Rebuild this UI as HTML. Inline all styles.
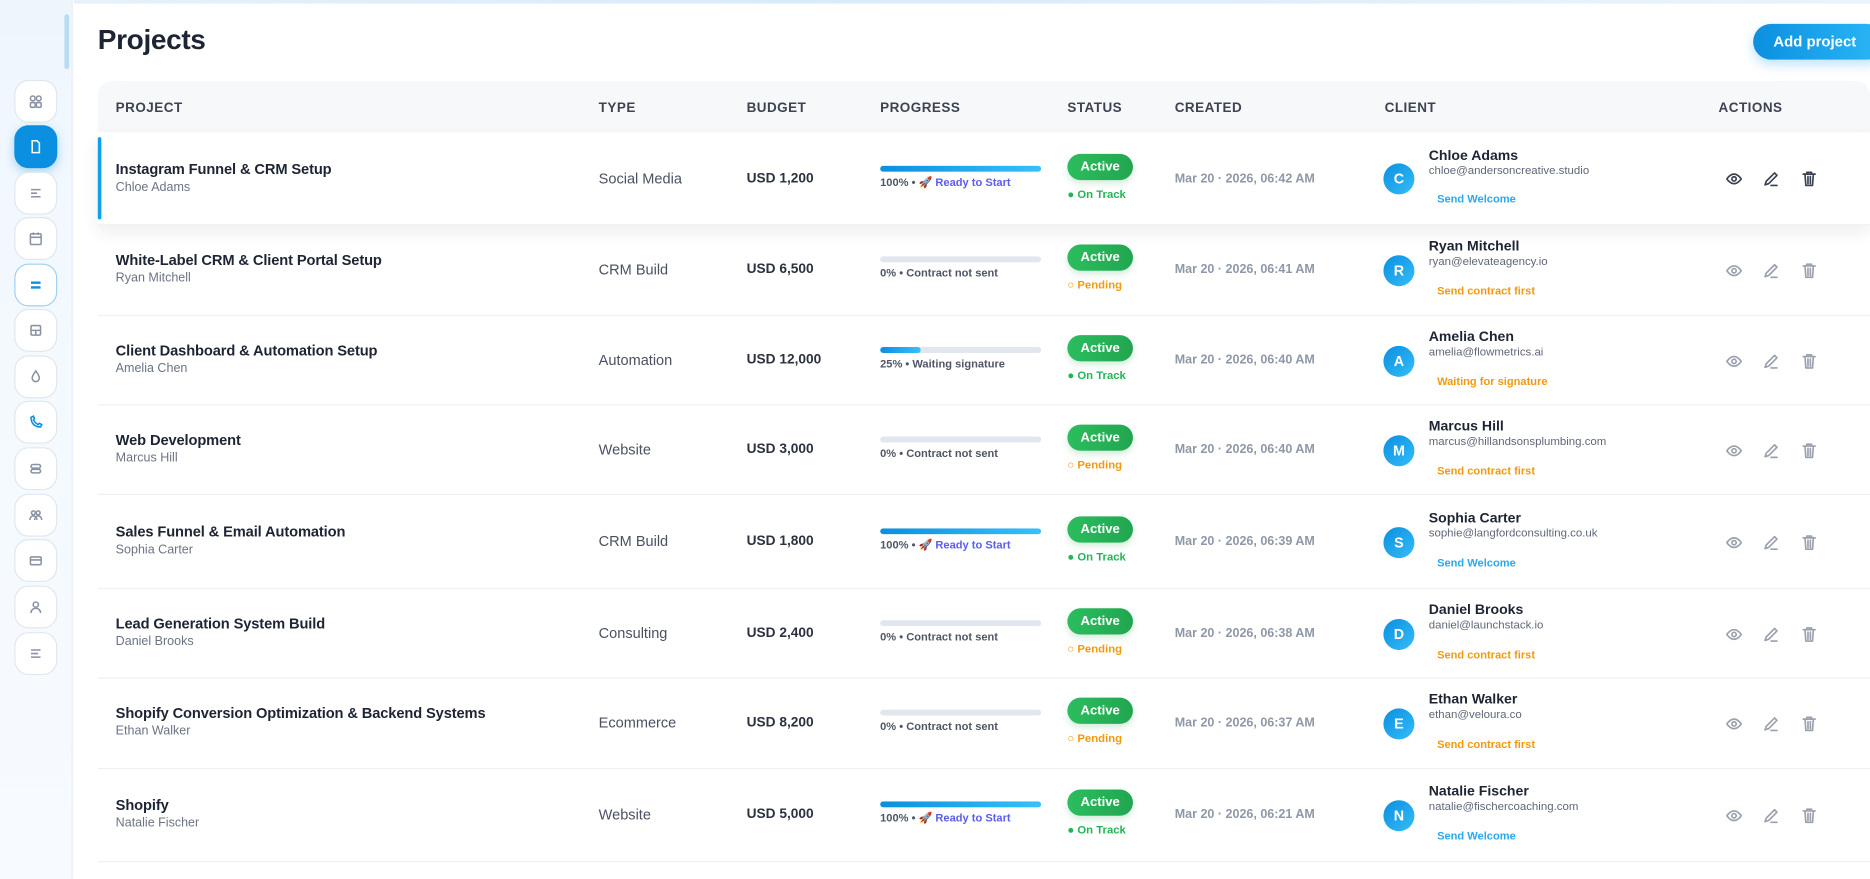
<!DOCTYPE html>
<html><head><meta charset="utf-8">
<style>
*{box-sizing:border-box;margin:0;padding:0}
html,body{width:1870px;height:879px;overflow:hidden;background:#fff;font-family:"Liberation Sans",sans-serif}
#w{width:1568px;height:737px;transform:scale(1.19260);transform-origin:0 0;position:relative;background:#fff}
.sb{position:absolute;left:0;top:0;width:61px;height:737px;background:linear-gradient(180deg,#eef6fd,#f4f9fe 40%,#f7fbff);border-right:1px solid #e3ecf5}
.scr{position:absolute;left:54px;top:12px;width:4px;height:46px;border-radius:2px;background:#b9dcf5}
.nb{position:absolute;left:12px;width:36px;height:36px;border-radius:12px;background:#fff;border:1px solid #e1e7ef;display:flex;align-items:center;justify-content:center}
.nb.on{background:#0b8fe0;border-color:#0b8fe0;box-shadow:0 3px 8px rgba(11,143,224,.35)}
.nb svg{width:12px;height:12px;fill:none;stroke:#8a93a3;stroke-width:1.3}
.topl{position:absolute;left:62px;top:0;right:0;height:3px;background:linear-gradient(90deg,#e6f1fb,#d8ebfa 40%,#eaf3fc)}
h1{position:absolute;left:82px;top:20px;font-size:23.5px;font-weight:700;color:#1d2433;letter-spacing:-.3px}
.add{position:absolute;left:1470px;top:20px;width:110px;height:30px;border-radius:15px;background:linear-gradient(90deg,#0b8fe0,#2bb7f7);color:#fff;font-weight:700;font-size:12.5px;line-height:30px;padding-left:17px;box-shadow:0 4px 10px rgba(30,160,240,.3)}
.card{position:absolute;left:82px;top:68px;width:1500px;height:670px;border-radius:12px 0 0 0;background:#fff}
.hd{position:absolute;left:82px;top:68px;width:1486px;height:43px;background:#f7f8fa;border-radius:12px 12px 0 0}
.hl{position:absolute;top:85px;font-size:11.3px;font-weight:700;color:#3d4351;letter-spacing:.4px}
.row{position:absolute;left:82px;width:1486px;border-bottom:1px solid #eef0f3}
.row.hi{background:#fff;box-shadow:0 6px 14px rgba(20,30,50,.08);z-index:2}
.row.hi:before{content:"";position:absolute;left:0;top:4px;bottom:4px;width:3px;background:#0ea0ea;border-radius:2px}
.t{position:absolute;font-size:12.3px;font-weight:700;color:#1d2433;white-space:nowrap;letter-spacing:-.1px}
.s{position:absolute;font-size:10.5px;color:#6b7385;white-space:nowrap}
.ty{position:absolute;font-size:12.2px;color:#4a5162}
.bu{position:absolute;font-size:11.5px;font-weight:700;color:#2b3140}
.bar{position:absolute;left:656px;width:135px;height:5px;border-radius:3px;background:#e2e7ef;overflow:hidden}
.bar i{display:block;height:100%;background:linear-gradient(90deg,#0b8fe0,#37c0fa);border-radius:3px}
.pt{position:absolute;left:656px;font-size:9.3px;color:#4f5666;white-space:nowrap;font-weight:600}
.pt b{color:#5b5cf0}
.act{position:absolute;left:813px;width:55px;height:22px;border-radius:11px;background:linear-gradient(90deg,#2bbd5e,#22a650);color:#fff;font-size:11px;font-weight:700;text-align:center;line-height:22px;box-shadow:0 3px 6px rgba(34,166,80,.2)}
.st{position:absolute;left:813px;font-size:9.5px;font-weight:700;white-space:nowrap}
.ok{color:#22b455}.pd{color:#f29a0e}
.cr{position:absolute;left:903px;font-size:10.5px;color:#8f98a8;font-weight:600;white-space:nowrap}
.av{position:absolute;left:1078px;width:26px;height:26px;border-radius:50%;background:linear-gradient(135deg,#0b8fe0,#34bdf8);color:#fff;font-size:12px;font-weight:700;text-align:center;line-height:26px}
.cn{position:absolute;left:1116px;font-size:11.8px;font-weight:700;color:#1d2433;white-space:nowrap}
.ce{position:absolute;left:1116px;font-size:9.6px;color:#5f6778;white-space:nowrap}
.cl{position:absolute;left:1123px;font-size:9.3px;font-weight:700;white-space:nowrap}
.bl{color:#2aa9ec}
.ic{position:absolute;width:14px;height:14px;fill:none;stroke:#9aa1ad;stroke-width:1.4;stroke-linecap:round;stroke-linejoin:round}
.hi .ic{stroke:#3a4150}
</style></head><body><div id="w">
<div class="topl"></div>
<div class="sb"><div class="scr"></div>
<div class="nb" style="top:67px"><svg viewBox="0 0 12 12"><circle cx="3.5" cy="3.5" r="2"/><circle cx="8.5" cy="3.5" r="2"/><rect x="1.5" y="7" width="4" height="4" rx="1"/><rect x="6.5" y="7" width="4" height="4" rx="1"/></svg></div>
<div class="nb on" style="top:105px"><svg viewBox="0 0 12 12" style="stroke:#fff"><path d="M3 1h4l2 2v8H3z"/></svg></div>
<div class="nb" style="top:144px"><svg viewBox="0 0 12 12"><path d="M2 3h8M2 6h5M2 9h8"/></svg></div>
<div class="nb" style="top:182px"><svg viewBox="0 0 12 12"><rect x="1.5" y="2" width="9" height="9" rx="1"/><path d="M1.5 5h9M4 1v2M8 1v2"/></svg></div>
<div class="nb" style="top:221px;border-color:#9fd0f2"><svg viewBox="0 0 12 12" style="stroke:#0b8fe0;stroke-width:2"><path d="M2 4h8M2 8h8"/></svg></div>
<div class="nb" style="top:259px"><svg viewBox="0 0 12 12"><rect x="2" y="2" width="8" height="8" rx="1"/><path d="M2 6h8M6 6v4"/></svg></div>
<div class="nb" style="top:298px"><svg viewBox="0 0 12 12"><path d="M6 1c2 3 3 4 3 6a3 3 0 01-6 0c0-2 1-3 3-6z"/></svg></div>
<div class="nb" style="top:336px"><svg viewBox="0 0 12 12" style="stroke:#0b8fe0"><path d="M2 2c0 5 3 8 8 8l1-2-2-1-1 1c-2-1-3-2-4-4l1-1-1-2z"/></svg></div>
<div class="nb" style="top:375px"><svg viewBox="0 0 12 12"><rect x="2" y="2.5" width="8" height="3" rx="1.5"/><rect x="2" y="6.5" width="8" height="3" rx="1.5"/></svg></div>
<div class="nb" style="top:414px"><svg viewBox="0 0 12 12"><circle cx="4" cy="4" r="1.6"/><circle cx="8" cy="4" r="1.6"/><path d="M1 10c0-2 1.5-3.5 3-3.5S7 8 7 10M5 10c0-2 1.5-3.5 3-3.5S11 8 11 10"/></svg></div>
<div class="nb" style="top:452px"><svg viewBox="0 0 12 12"><rect x="1.5" y="3" width="9" height="6.5" rx="1"/><path d="M1.5 5.5h9"/></svg></div>
<div class="nb" style="top:491px"><svg viewBox="0 0 12 12"><circle cx="6" cy="4" r="2.2"/><path d="M2 11c0-2.5 2-4 4-4s4 1.5 4 4"/></svg></div>
<div class="nb" style="top:530px"><svg viewBox="0 0 12 12"><path d="M2 3h8M2 6h6M2 9h8"/></svg></div>
</div>
<h1>Projects</h1>
<div class="add">Add project</div>
<div class="card"></div>
<div class="hd"></div>
<div class="hl" style="left:97px">PROJECT</div><div class="hl" style="left:502px">TYPE</div><div class="hl" style="left:626px">BUDGET</div><div class="hl" style="left:738px">PROGRESS</div><div class="hl" style="left:895px">STATUS</div><div class="hl" style="left:985px">CREATED</div><div class="hl" style="left:1161px">CLIENT</div><div class="hl" style="left:1441px">ACTIONS</div>

<div class="row hi" style="top:111px;height:78px">
<div class="t" style="left:15px;top:24px">Instagram Funnel &amp; CRM Setup</div><div class="s" style="left:15px;top:40px">Chloe Adams</div>
<div class="ty" style="left:420px;top:32px">Social Media</div><div class="bu" style="left:544px;top:33px">USD 1,200</div>
<div class="bar" style="top:28px"><i style="width:100%"></i></div><div class="pt" style="top:37px">100% • 🚀 <b>Ready to Start</b></div>
<div class="act" style="top:18px">Active</div><div class="st ok" style="top:47px">● On Track</div>
<div class="cr" style="top:33px">Mar 20 · 2026, 06:42 AM</div>
<div class="av" style="top:26px">C</div><div class="cn" style="top:12px">Chloe Adams</div><div class="ce" style="top:27px">chloe@andersoncreative.studio</div><div class="cl bl" style="top:51px">Send Welcome</div>
<svg class="ic" style="left:1365px;top:32px" viewBox="0 0 14 14"><path d="M1 7s2.5-4 6-4 6 4 6 4-2.5 4-6 4-6-4-6-4z"/><circle cx="7" cy="7" r="1.8"/></svg>
<svg class="ic" style="left:1396px;top:32px" viewBox="0 0 14 14"><path d="M2 12l1-3 7-7 2 2-7 7zM7 12.5h5"/></svg>
<svg class="ic" style="left:1428px;top:32px" viewBox="0 0 14 14"><path d="M2 3h10M5 3V1.5h4V3M3.5 3l.7 9.5h5.6l.7-9.5M6 5v6M8 5v6"/></svg>
</div>

<div id="rows"></div>
<script>
var d=[
[189,76,"White-Label CRM & Client Portal Setup","Ryan Mitchell","CRM Build","USD 6,500",0,"0% • Contract not sent",0,"Mar 20 · 2026, 06:41 AM","R","ryan@elevateagency.io",0],
[265,75,"Client Dashboard & Automation Setup","Amelia Chen","Automation","USD 12,000",25,"25% • Waiting signature",1,"Mar 20 · 2026, 06:40 AM","A","amelia@flowmetrics.ai",2],
[340,75,"Web Development","Marcus Hill","Website","USD 3,000",0,"0% • Contract not sent",0,"Mar 20 · 2026, 06:40 AM","M","marcus@hillandsonsplumbing.com",0],
[415,79,"Sales Funnel & Email Automation","Sophia Carter","CRM Build","USD 1,800",100,"",1,"Mar 20 · 2026, 06:39 AM","S","sophie@langfordconsulting.co.uk",1],
[494,75,"Lead Generation System Build","Daniel Brooks","Consulting","USD 2,400",0,"0% • Contract not sent",0,"Mar 20 · 2026, 06:38 AM","D","daniel@launchstack.io",0],
[569,76,"Shopify Conversion Optimization & Backend Systems","Ethan Walker","Ecommerce","USD 8,200",0,"0% • Contract not sent",0,"Mar 20 · 2026, 06:37 AM","E","ethan@veloura.co",0],
[645,78,"Shopify","Natalie Fischer","Website","USD 5,000",100,"",1,"Mar 20 · 2026, 06:21 AM","N","natalie@fischercoaching.com",1]];
var names={R:"Ryan Mitchell",A:"Amelia Chen",M:"Marcus Hill",S:"Sophia Carter",D:"Daniel Brooks",E:"Ethan Walker",N:"Natalie Fischer"};
var h="";
d.forEach(function(r){var c=Math.round(r[1]/2)-1;
var pt=r[7]?r[7]:'100% • 🚀 <b>Ready to Start</b>';
var link=r[12]==0?'<div class="cl pd" style="top:'+(c+13)+'px">Send contract first</div>':r[12]==1?'<div class="cl bl" style="top:'+(c+13)+'px">Send Welcome</div>':'<div class="cl pd" style="top:'+(c+13)+'px">Waiting for signature</div>';
h+='<div class="row" style="top:'+r[0]+'px;height:'+r[1]+'px">'+
'<div class="t" style="left:15px;top:'+(c-15)+'px">'+r[2].replace('&','&amp;')+'</div><div class="s" style="left:15px;top:'+(c+1)+'px">'+r[3]+'</div>'+
'<div class="ty" style="left:420px;top:'+(c-7)+'px">'+r[4]+'</div><div class="bu" style="left:544px;top:'+(c-6)+'px">'+r[5]+'</div>'+
'<div class="bar" style="top:'+(c-11)+'px"><i style="width:'+r[6]+'%"></i></div><div class="pt" style="top:'+(c-2)+'px">'+pt+'</div>'+
'<div class="act" style="top:'+(c-21)+'px">Active</div><div class="st '+(r[8]?'ok':'pd')+'" style="top:'+(c+8)+'px">'+(r[8]?'● On Track':'○ Pending')+'</div>'+
'<div class="cr" style="top:'+(c-6)+'px">'+r[9]+'</div>'+
'<div class="av" style="top:'+(c-12)+'px">'+r[10]+'</div><div class="cn" style="top:'+(c-27)+'px">'+names[r[10]]+'</div><div class="ce" style="top:'+(c-12)+'px">'+r[11]+'</div>'+link+
'<svg class="ic" style="left:1365px;top:'+(c-6)+'px" viewBox="0 0 14 14"><path d="M1 7s2.5-4 6-4 6 4 6 4-2.5 4-6 4-6-4-6-4z"/><circle cx="7" cy="7" r="1.8"/></svg>'+
'<svg class="ic" style="left:1396px;top:'+(c-6)+'px" viewBox="0 0 14 14"><path d="M2 12l1-3 7-7 2 2-7 7zM7 12.5h5"/></svg>'+
'<svg class="ic" style="left:1428px;top:'+(c-6)+'px" viewBox="0 0 14 14"><path d="M2 3h10M5 3V1.5h4V3M3.5 3l.7 9.5h5.6l.7-9.5M6 5v6M8 5v6"/></svg></div>';});
document.getElementById('rows').innerHTML=h;
</script>
</div></body></html>
